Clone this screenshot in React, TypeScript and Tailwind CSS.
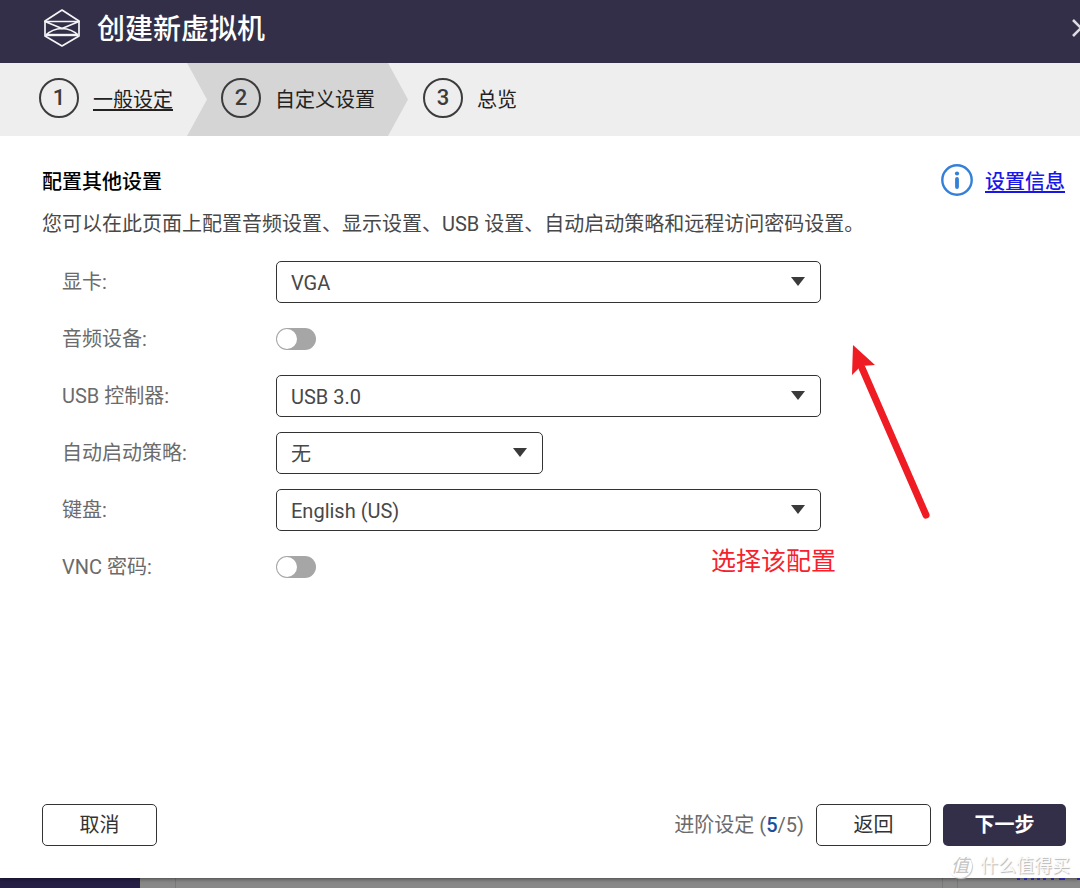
import React, { useState } from "react";

const steps = [
  { id: 1, name: "一般设定" },
  { id: 2, name: "自定义设置" },
  { id: 3, name: "总览" }
];

interface SelectRowProps {
  id: string;
  label: string;
  options: string[];
  narrow?: boolean;
}

function SelectRow({ id, label, options, narrow }: SelectRowProps) {
  const [value, setValue] = useState(options[0]);

  return (
    <div className="flex items-center min-h-[42px]">
      <label htmlFor={id} className="w-[214px] shrink-0 text-[#6b6b6b]">{label}</label>
      <div className={narrow ? "relative w-full max-w-[267px]" : "relative w-full max-w-[545px]"}>
        <select
          id={id}
          value={value}
          onChange={(e) => setValue(e.target.value)}
          className="block w-full h-[42px] pt-0.5 pl-3.5 pr-10 appearance-none rounded-[5px] border border-[#333] bg-white text-[#484848]"
        >
          {options.map((option) => (
            <option key={option}>{option}</option>
          ))}
        </select>
        <svg viewBox="0 0 14 9" className="absolute right-4 top-4 w-3.5 h-[9px] pointer-events-none" fill="#3a3a3a">
          <path d="M0 0h14L7 9z" />
        </svg>
      </div>
    </div>
  );
}

function SwitchRow({ id, label }: { id: string; label: string }) {
  const [on, setOn] = useState(false);

  return (
    <div className="flex items-center min-h-[42px]">
      <label htmlFor={id} className="w-[214px] shrink-0 text-[#6b6b6b]">{label}</label>
      <input
        id={id}
        type="checkbox"
        role="switch"
        checked={on}
        onChange={(e) => setOn(e.target.checked)}
        className="flex items-center appearance-none w-10 h-[22px] px-px rounded-full bg-[#a6a6a6] checked:bg-[#342f48] checked:justify-end before:block before:w-5 before:h-5 before:rounded-full before:bg-white"
      />
    </div>
  );
}

function Logo() {
  return (
    <svg viewBox="0 0 38 40" className="w-[38px] h-10" fill="none" stroke="#f4f4f6" strokeWidth="1.7" strokeLinejoin="round">
      <path d="M19 2 36 13v15L19 38 2 28V13z" />
      <path d="M2 13.500h34L19 20.500z" />
      <path d="M3 27q6-6 16-6.500Q29 21 35 27" />
      <path d="M3 27h32" strokeWidth="2.400" />
    </svg>
  );
}

export default function App() {
  return (
    <div className="relative min-h-screen flex flex-col overflow-hidden bg-[#898989] text-xl leading-7 font-['Roboto','Noto_Sans_CJK_SC',sans-serif]">
      <div className="relative z-10 flex-1 flex flex-col bg-white shadow-[0_1px_4px_rgba(0,0,0,0.5)]">

        {/* Title bar */}
        <header className="flex items-center h-[63px] pb-2 pl-[43px] bg-[#342f48] text-white">
          <Logo />
          <h1 className="ml-4 pt-1 text-[28px] leading-9 font-medium">创建新虚拟机</h1>
          <button type="button" aria-label="关闭" className="ml-auto -mr-[11px]">
            <svg viewBox="0 0 20 20" className="w-5 h-5" fill="none" stroke="#dddce2" strokeWidth="2.6">
              <path d="m2 2 16 16M18 2 2 18" />
            </svg>
          </button>
        </header>

        {/* Wizard steps */}
        <ol className="flex h-[73px] bg-[#eee] text-[#222]">
          {steps.map((step) => (
            <li
              key={step.id}
              className={
                step.id === 1
                  ? "flex items-center w-[187px] pl-[39px] pb-1"
                  : step.id === 2
                    ? "flex items-center w-[221px] pl-[34px] pb-1 bg-[#d5d5d5] [clip-path:polygon(0_0,201px_0,100%_50%,201px_100%,0_100%,20px_50%)]"
                    : "flex items-center pl-[15px] pb-1"
              }
            >
              <span className="flex items-center justify-center w-10 h-10 shrink-0 rounded-full border-2 border-[#3c3c3c] text-[22px] font-medium text-[#3c3c3c]">
                {step.id}
              </span>
              {step.id === 1 ? (
                <a href="#general" className="ml-3.5 pt-1 whitespace-nowrap underline underline-offset-2">{step.name}</a>
              ) : (
                <span className="ml-3.5 pt-1 whitespace-nowrap">{step.name}</span>
              )}
            </li>
          ))}
        </ol>

        <main className="relative flex-1 pl-[42px] pr-[15px] pt-7">
          <div className="flex items-center justify-between h-8">
            <h2 className="pt-1 font-medium text-black">配置其他设置</h2>
            <a href="#info" className="flex items-center gap-3 font-medium text-[#1717e8]">
              <svg viewBox="0 0 32 32" className="w-8 h-8" fill="none" stroke="#3480d8">
                <circle cx="16" cy="16" r="14.7" strokeWidth="2.400" />
                <circle cx="16" cy="9.500" r="2.100" fill="#3480d8" stroke="none" />
                <path d="M16 15v8" strokeWidth="3.800" strokeLinecap="round" />
              </svg>
              <span className="pt-1 underline underline-offset-2">设置信息</span>
            </a>
          </div>
          <p className="mt-3.5 text-[#484848]">
            您可以在此页面上配置音频设置、显示设置、USB 设置、自动启动策略和远程访问密码设置。
          </p>

          <form className="flex flex-col gap-[15px] mt-[23px] pl-5">
            <SelectRow id="gpu" label="显卡:" options={["VGA", "QXL", "VirtIO"]} />
            <SwitchRow id="audio" label="音频设备:" />
            <SelectRow id="usb" label="USB 控制器:" options={["USB 3.0", "USB 2.0"]} />
            <SelectRow id="autostart" label="自动启动策略:" options={["无", "开启"]} narrow />
            <SelectRow id="keyboard" label="键盘:" options={["English (US)", "English (UK)"]} />
            <SwitchRow id="vnc" label="VNC 密码:" />
          </form>

          {/* Red markup over the form */}
          <svg viewBox="0 0 80 176" className="absolute left-[851px] top-[208px] w-20 h-44 pointer-events-none">
            <path d="M75 171 11 24" stroke="#ef1c24" strokeWidth="7" strokeLinecap="round" />
            <path d="M2 1 24 21 10 22 1 31z" fill="#ef1c24" />
          </svg>
          <p className="absolute left-[711px] top-[412px] text-[25px] text-[#f5222d]">选择该配置</p>
        </main>

        <footer className="flex items-center pl-[42px] pr-3.5 pb-8 text-[#484848]">
          <button type="button" className="w-[115px] h-[42px] rounded-[5px] border border-[#333] text-[#333]">取消</button>
          <span className="ml-auto text-[#6b6b6b]">
            进阶设定 (<span className="font-medium text-[#1a4fa0]">5</span>/5)
          </span>
          <button type="button" className="ml-3 w-[115px] h-[42px] rounded-[5px] border border-[#333] text-[#333]">返回</button>
          <button type="button" className="ml-3 w-[123px] h-[42px] rounded-[5px] bg-[#342f48] font-bold text-white">下一步</button>
        </footer>
      </div>

      {/* Page behind the dialog */}
      <div className="flex h-2.5">
        <div className="w-[140px] bg-[#262046]" />
        <div className="w-9 border-r border-[#7a7a7a]" />
        <div className="flex-1" />
        <div className="w-4 border-x border-[#7a7a7a]" />
        <div className="relative z-10 w-[122px]">
          <svg viewBox="0 0 122 3" className="w-full h-[3px]" stroke="#2a2a9c" strokeWidth="2">
            <path d="M59 1h3M66 1h3M73 1h3M79 1h3M85 1h3M93 1h3M101 1h6M119 1h3" />
          </svg>
        </div>
      </div>

      {/* Watermark */}
      <div className="absolute z-20 right-2.5 bottom-2 flex items-center gap-2 text-[18px] text-[#fafafa] [text-shadow:1px_1px_1px_#b4b4b4] pointer-events-none">
        <span className="flex items-center justify-center w-6 h-6 rounded-full bg-white shadow-[1px_1px_1px_#ccc] text-[18px] italic text-[#c4c4c4] [text-shadow:none]">值</span>
        <span>什么值得买</span>
      </div>
    </div>
  );
}
